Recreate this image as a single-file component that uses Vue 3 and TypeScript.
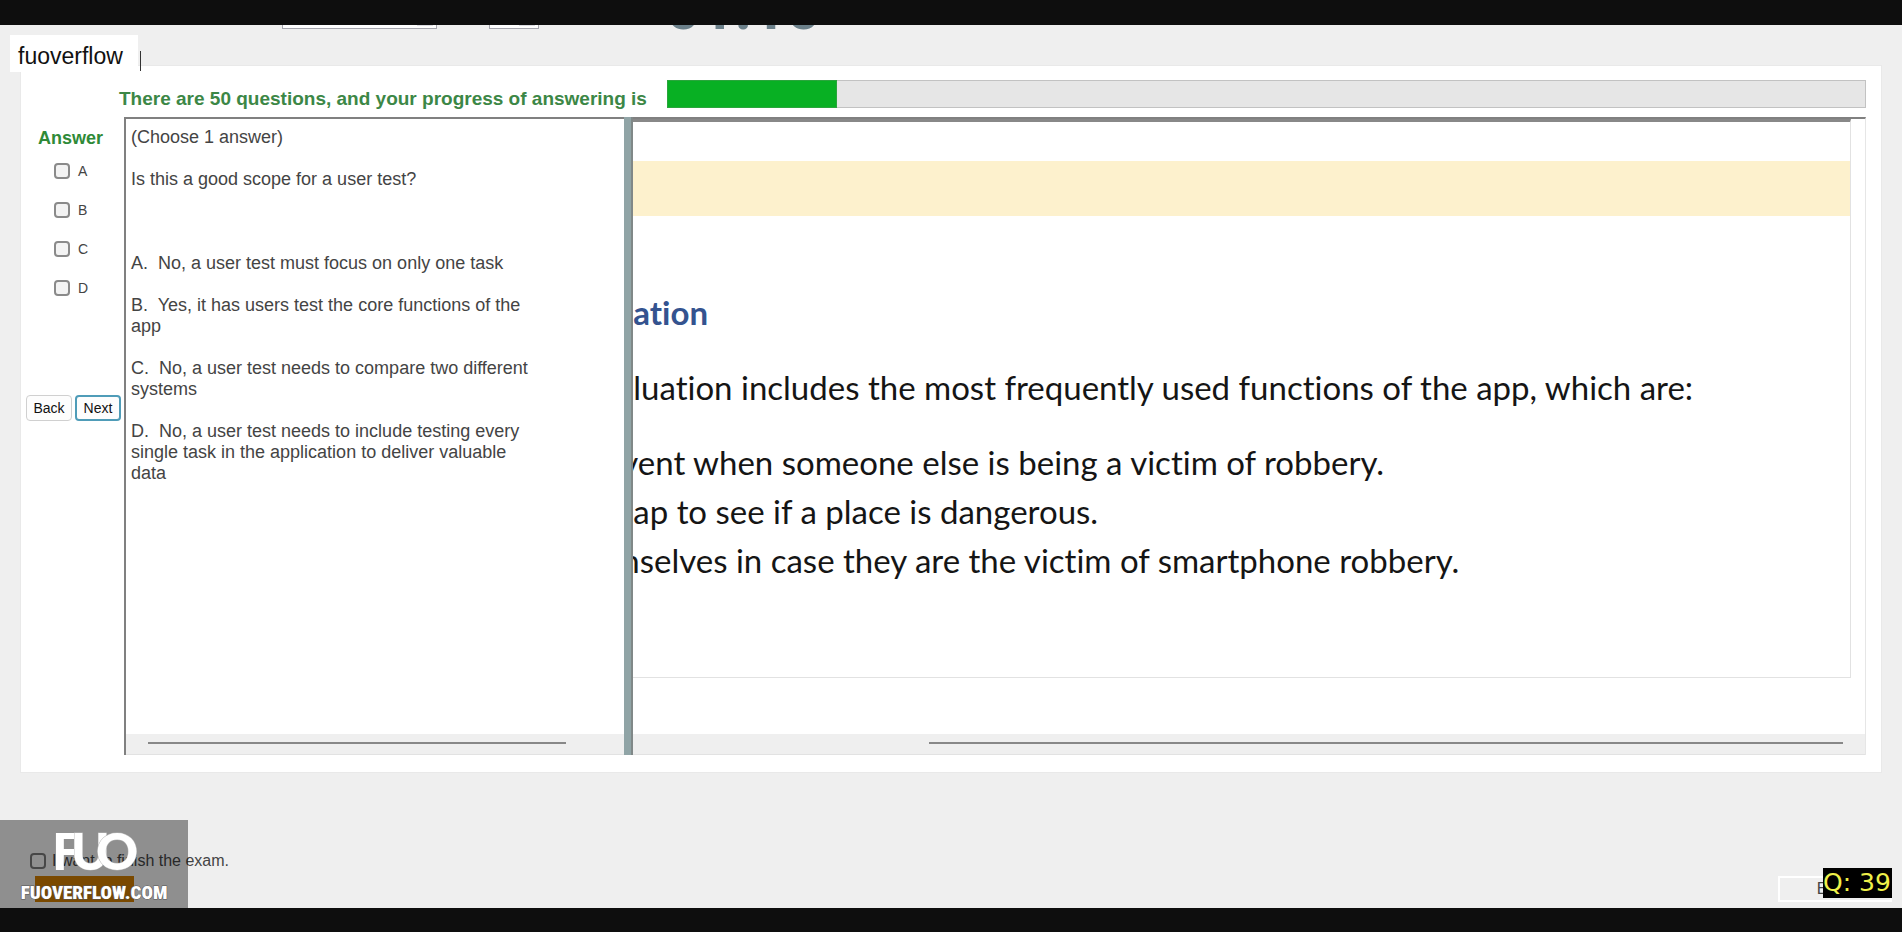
<script setup lang="ts">
import { ref } from 'vue'

const letters: string[] = ['A', 'B', 'C', 'D']
const picked = ref<string[]>([])
const finish = ref(false)
const answered = ref(14)

const options: string[] = [
  'A.\u00a0 No, a user test must focus on only one task',
  'B.\u00a0 Yes, it has users test the core functions of the app',
  'C.\u00a0 No, a user test needs to compare two different systems',
  'D.\u00a0 No, a user test needs to include testing every single task in the application to deliver valuable data',
]
</script>

<template>
  <div class="page">
    <div class="band top"></div>
    <main class="screen">
      <header class="head">
        <select class="drop wide" aria-label="Font"><option></option></select>
        <select class="drop small" aria-label="Size"><option></option></select>
        <span class="timer">01:10</span>
      </header>

      <section class="card">
        <div class="progress-row">
          <span id="plabel" class="green progress-label">There are 50 questions, and your progress of answering is</span>
          <div class="track" role="progressbar" aria-labelledby="plabel" :aria-valuenow="answered">
            <div class="fill" :style="{ width: answered + '%' }"></div>
          </div>
        </div>

        <div class="work">
          <aside class="side">
            <h2 class="green side-title">Answer</h2>
            <label v-for="l in letters" :key="l" class="choice">
              <input v-model="picked" type="checkbox" class="box" :value="l" />
              <span>{{ l }}</span>
            </label>
            <div class="nav">
              <button type="button" class="btn">Back</button>
              <button type="button" class="btn active">Next</button>
            </div>
          </aside>

          <article class="question">
            <div class="question-text">
              <p>(Choose 1 answer)</p>
              <p class="ask">Is this a good scope for a user test?</p>
              <p v-for="o in options" :key="o">{{ o }}</p>
            </div>
            <div class="scroll left"><div class="thumb"></div></div>
          </article>

          <div class="splitter"></div>

          <article class="exhibit">
            <div class="sheet">
              <div class="strip"></div>
              <h1>ation</h1>
              <p class="intro">luation includes the most frequently used functions of the app, which are:</p>
              <p class="cut">vent when someone else is being a victim of robbery.</p>
              <p>ap to see if a place is dangerous.</p>
              <p class="cut">nselves in case they are the victim of smartphone robbery.</p>
            </div>
            <div class="scroll right"><div class="thumb"></div></div>
          </article>
        </div>
      </section>

      <footer class="foot">
        <div class="finish">
          <label class="finish-label">
            <input v-model="finish" type="checkbox" class="box clear" />
            <span>I want to finish the exam.</span>
          </label>
          <button type="button" class="submit" aria-label="Finish"></button>
        </div>
        <button type="button" class="exit">Exit</button>
      </footer>

      <div class="tag">fuoverflow</div>
      <div class="caret"></div>
      <div class="mark">
        <svg width="188" height="88" viewBox="0 0 188 88" aria-label="FUO">
          <g class="logo">
            <text x="52" y="50">F</text>
            <text x="71" y="50" class="edge">U</text>
            <text x="96" y="50" class="edge">O</text>
          </g>
          <text x="94" y="79" text-anchor="middle" class="site">FUOVERFLOW.COM</text>
        </svg>
      </div>
      <div class="badge">Q: 39</div>
    </main>
    <div class="band bottom"></div>
  </div>
</template>

<style>
body {
  margin: 0;
}
</style>

<style scoped>
* {
  box-sizing: border-box;
}
.page {
  min-height: 100vh;
  display: flex;
  flex-direction: column;
  font-family: 'Liberation Sans', Arial, sans-serif;
  color: #444;
}
.band {
  background: #0e0e0e;
}
.top {
  height: 25px;
}
.bottom {
  height: 24px;
}
.screen {
  position: relative;
  flex: 1;
  display: flex;
  flex-direction: column;
  background: #efefef;
  overflow: hidden;
}
.head {
  height: 41px;
  display: flex;
  align-items: flex-start;
  padding-left: 282px;
  overflow: hidden;
}
.drop {
  appearance: none;
  height: 24px;
  margin-top: -20px;
  border: 1px solid #a5a5ad;
  border-radius: 0;
  background: linear-gradient(#dcdce2, #dcdce2) right 3px bottom 2px / 16px 20px no-repeat #fff;
}
.wide {
  width: 155px;
  margin-right: 52px;
}
.small {
  width: 50px;
  margin-right: 127px;
}
.timer {
  font-family: Roboto, sans-serif;
  font-size: 60px;
  line-height: 60px;
  font-weight: 700;
  color: #6b808a;
  margin-top: -46px;
}
.card {
  flex: 1;
  display: flex;
  flex-direction: column;
  margin: 0 21px;
  padding: 14px 15px 17px 0;
  background: #fff;
  outline: 1px solid #e9e9e9;
}
.green {
  color: #3c8746;
  font-weight: 700;
  font-size: 18px;
  line-height: 20px;
}
.progress-row {
  display: flex;
  align-items: center;
  height: 28px;
  margin-bottom: 9px;
  padding-left: 98px;
}
.progress-label {
  flex: 0 0 548px;
  padding-top: 10px;
  font-size: 19px;
  white-space: nowrap;
}
.track {
  flex: 1;
  height: 28px;
  border: 1px solid #c2c2c2;
  background: #e6e6e6;
}
.fill {
  height: 100%;
  background: #08b023;
  outline: 1px solid #2aa53c;
}
.work {
  flex: 1;
  display: grid;
  grid-template-columns: 103px minmax(0, 500fr) 9px minmax(0, 1232fr);
}
.side {
  display: flex;
  flex-direction: column;
}
.side-title {
  margin: 11px 0 15px 17px;
  color: #2f8a38;
}
.choice {
  display: flex;
  align-items: center;
  gap: 8px;
  height: 16px;
  margin: 0 0 23px 33px;
  font-size: 14px;
  line-height: 16px;
}
.box {
  appearance: none;
  width: 16px;
  height: 16px;
  margin: 0;
  border: 2px solid #8a8a8a;
  border-radius: 4px;
  background: #f3f3f3;
}
.clear {
  background: transparent;
  border-color: #777;
}
.nav {
  display: flex;
  gap: 3px;
  margin: 76px 0 0 5px;
}
.btn {
  width: 46px;
  height: 26px;
  padding: 0;
  border: 1px solid #d0d0d0;
  border-radius: 4px;
  background: #fdfdfd;
  color: #111;
  font-family: inherit;
  font-size: 14px;
}
.active {
  border: 2px solid #4f9cb8;
}
.question {
  display: flex;
  flex-direction: column;
  border-top: 2px solid #808080;
  border-left: 2px solid #808080;
}
.question-text {
  flex: 1;
  padding: 8px 90px 0 5px;
  font-size: 18px;
  line-height: 21px;
}
.question-text p {
  margin: 0 0 21px;
}
.question-text .ask {
  margin-bottom: 63px;
}
.scroll {
  height: 21px;
  display: flex;
  align-items: center;
  padding-bottom: 2px;
  background: #efefef;
  border-bottom: 1px solid #e2e2e2;
}
.left {
  padding-left: 22px;
  padding-right: 58px;
}
.right {
  padding-left: 24%;
  padding-right: 22px;
}
.thumb {
  flex: 1;
  height: 2px;
  background: #888;
}
.splitter {
  background: #90a4a6;
  border-right: 2px solid #808888;
}
.exhibit {
  display: flex;
  flex-direction: column;
  justify-content: space-between;
  border-top: 2px solid #808080;
  border-right: 1px solid #e6e6e6;
}
.sheet {
  height: 559px;
  margin-right: 14px;
  overflow: hidden;
  border-top: 3px solid #888;
  border-right: 1px solid #e2e2e2;
  border-bottom: 1px solid #e2e2e2;
  font-family: Lato, 'Open Sans', sans-serif;
  font-size: 33px;
  font-variant-ligatures: none;
  line-height: 49px;
  color: #151515;
  white-space: nowrap;
}
.strip {
  height: 55px;
  margin-top: 39px;
  background: #fdf1cd;
}
.sheet h1 {
  margin: 72px 0 26px;
  font-size: 33px;
  line-height: 49px;
  color: #34538f;
}
.sheet p {
  margin: 0;
}
.sheet .intro {
  margin-bottom: 26px;
}
.cut {
  text-indent: -12px;
}
.foot {
  height: 136px;
  display: flex;
  justify-content: space-between;
  align-items: flex-end;
  padding: 0 10px 6px 30px;
}
.finish {
  display: flex;
  flex-direction: column;
}
.finish-label {
  display: flex;
  align-items: center;
  gap: 6px;
  font-size: 16px;
  line-height: 20px;
}
.submit {
  width: 99px;
  height: 26px;
  margin: 5px 0 0 5px;
  padding: 0;
  border: 0;
  background: #cc7b00;
}
.exit {
  width: 114px;
  height: 26px;
  padding: 0 10px 0 0;
  border: 2px solid #fff;
  background: #efefef;
  color: #444;
  font-family: inherit;
  font-size: 16px;
}
.tag {
  position: absolute;
  left: 10px;
  top: 10px;
  padding: 8px 15px 3px 8px;
  background: #fff;
  color: #111;
  font-size: 23px;
  line-height: 26px;
}
.caret {
  position: absolute;
  left: 140px;
  top: 26px;
  width: 1px;
  height: 20px;
  background: #333;
}
.mark {
  position: absolute;
  left: 0;
  bottom: 0;
  height: 88px;
  background: rgba(0, 0, 0, 0.4);
}
.mark svg {
  display: block;
}
.logo {
  font-family: Lato, sans-serif;
  font-weight: 900;
  font-size: 52px;
  fill: #fff;
}
.edge {
  stroke: #b5b5b5;
  stroke-width: 1px;
  paint-order: stroke;
}
.site {
  font-family: 'Roboto Condensed', Roboto, sans-serif;
  font-weight: 900;
  font-size: 19px;
  fill: #fff;
  stroke: #555;
  stroke-width: 1px;
  paint-order: stroke;
}
.badge {
  position: absolute;
  right: 10px;
  bottom: 10px;
  width: 69px;
  background: #000;
  color: #eef04a;
  font-family: 'DejaVu Sans', sans-serif;
  font-size: 25px;
  line-height: 30px;
  white-space: nowrap;
}
</style>
